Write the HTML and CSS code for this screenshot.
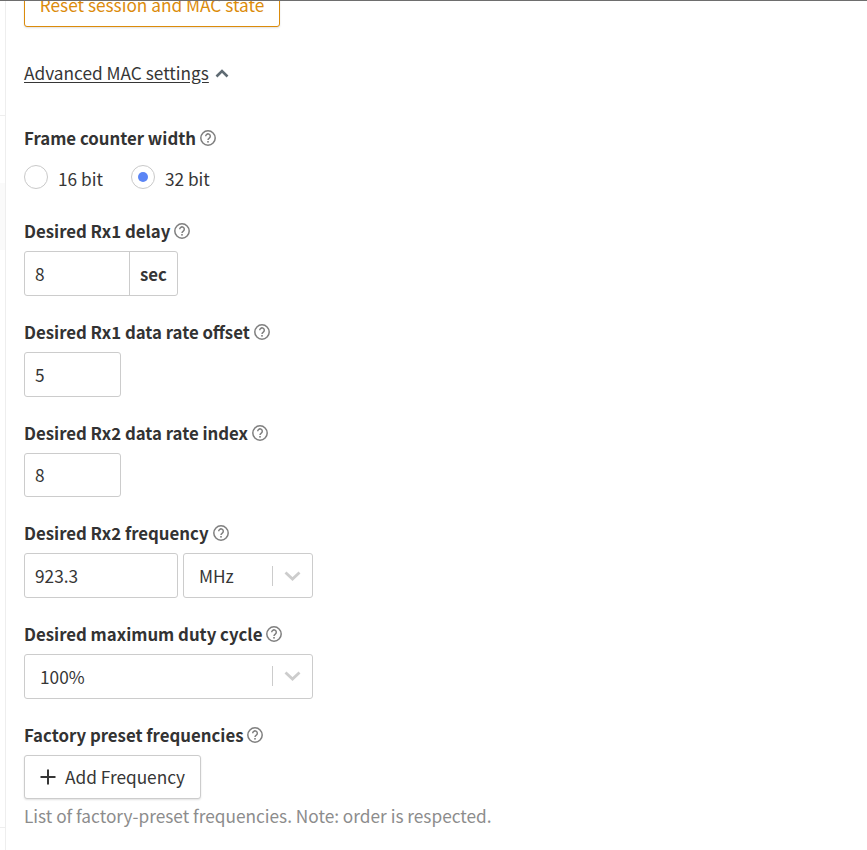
FILE: index.html
```html
<!DOCTYPE html>
<html lang="en">
<head>
  <meta charset="utf-8">
  <title>Advanced MAC settings</title>
  <link rel="stylesheet" href="styles.css">
</head>
<body>
  <div class="side-strip">
    <div class="strip-block strip-top"></div>
    <div class="strip-block strip-gap"></div>
    <div class="strip-block strip-fill"></div>
    <div class="strip-block strip-bottom"></div>
  </div>
  <div class="page">
    <main class="content">
      <div class="reset-row">
        <button class="button-reset">Reset session and MAC state</button>
      </div>

      <div class="collapse-row">
        <a class="collapse-link">Advanced MAC settings</a>
        <svg class="chevron-up" width="14" height="14" viewBox="0 0 14 14"><path d="M1.5 10.5 L7 5 L12.5 10.5" /></svg>
      </div>

      <div class="field field-radio">
        <div class="label"><span>Frame counter width</span><svg class="help" viewBox="0 0 16 16"><use href="#help" /></svg></div>
        <div class="radios">
          <label class="radio"><span class="radio-dot"></span><span class="radio-text">16 bit</span></label>
          <label class="radio"><span class="radio-dot checked"></span><span class="radio-text">32 bit</span></label>
        </div>
      </div>

      <div class="field">
        <div class="label"><span>Desired Rx1 delay</span><svg class="help" viewBox="0 0 16 16"><use href="#help" /></svg></div>
        <div class="input input-unit"><span class="value">8</span><span class="unit">sec</span></div>
      </div>

      <div class="field">
        <div class="label"><span>Desired Rx1 data rate offset</span><svg class="help" viewBox="0 0 16 16"><use href="#help" /></svg></div>
        <div class="input input-small"><span class="value">5</span></div>
      </div>

      <div class="field">
        <div class="label"><span>Desired Rx2 data rate index</span><svg class="help" viewBox="0 0 16 16"><use href="#help" /></svg></div>
        <div class="input input-small"><span class="value">8</span></div>
      </div>

      <div class="field">
        <div class="label"><span>Desired Rx2 frequency</span><svg class="help" viewBox="0 0 16 16"><use href="#help" /></svg></div>
        <div class="freq-row">
          <div class="input input-freq"><span class="value">923.3</span></div>
          <div class="input select select-unit">
            <span class="select-value">MHz</span>
            <span class="select-sep"></span>
            <svg class="chevron-down" width="17" height="10" viewBox="0 0 17 10"><path d="M1.5 1.5 L8.5 8 L15.5 1.5" /></svg>
          </div>
        </div>
      </div>

      <div class="field">
        <div class="label"><span>Desired maximum duty cycle</span><svg class="help" viewBox="0 0 16 16"><use href="#help" /></svg></div>
        <div class="input select select-wide">
          <span class="select-value">100%</span>
          <span class="select-sep"></span>
          <svg class="chevron-down" width="17" height="10" viewBox="0 0 17 10"><path d="M1.5 1.5 L8.5 8 L15.5 1.5" /></svg>
        </div>
      </div>

      <div class="field">
        <div class="label"><span>Factory preset frequencies</span><svg class="help" viewBox="0 0 16 16"><use href="#help" /></svg></div>
        <button class="button-add">
          <svg class="plus" width="16" height="16" viewBox="0 0 16 16"><path d="M8 .5 V15.5 M.5 8 H15.5" /></svg>
          Add Frequency
        </button>
        <div class="description">List of factory-preset frequencies. Note: order is respected.</div>
      </div>
    </main>
  </div>

  <svg class="defs" width="0" height="0">
    <symbol id="help" viewBox="0 0 16 16">
      <circle cx="8" cy="8" r="7.2" fill="none" stroke="currentColor" stroke-width="1.5" />
      <path d="M5.7 6.3 A2.3 2.3 0 1 1 9.3 8.1 C8.4 8.7 8 9 8 10" fill="none" stroke="currentColor" stroke-width="1.5" />
      <rect x="7.2" y="11" width="1.6" height="1.6" fill="currentColor" />
    </symbol>
  </svg>
</body>
</html>
```

FILE: styles.css
```css
html, body {
  margin: 0;
  height: 100%;
  overflow: hidden;
  background: #fff;
}
body {
  display: flex;
  font-family: "Noto Sans CJK JP", "Source Sans Pro", "Noto Sans", sans-serif;
  font-size: 17.25px;
  color: #363636;
  border-top: 1px solid #6e6e6e;
  box-sizing: border-box;
}
.side-strip {
  width: 5px;
  flex: none;
}
.strip-block {
  box-sizing: border-box;
}
.strip-top {
  height: 115px;
  border-bottom: 1px solid #eeeeee;
}
.strip-gap {
  height: 67px;
}
.strip-fill {
  height: 67px;
  background: #fafafa;
}
.strip-bottom {
  height: 578px;
  border-bottom: 1px solid #eeeeee;
}
.page {
  flex: 1;
  display: flow-root;
  border-left: 1px solid #eeeeee;
}
.content {
  padding-left: 18px;
  margin-top: -16px;
}
button {
  font: inherit;
  background: #fff;
  cursor: pointer;
}
.reset-row {
  height: 42px;
}
.button-reset {
  display: block;
  width: 256px;
  height: 42px;
  color: #db8b0b;
  border: 1px solid #db8b0b;
  border-radius: 3px;
  box-shadow: 0 1px 2px rgba(0,0,0,.12);
  padding: 0 0 3px;
}
.collapse-row {
  display: flex;
  align-items: center;
  gap: 6px;
  margin-top: 34px;
  height: 24px;
}
.collapse-link {
  text-decoration: underline;
  text-underline-offset: 2px;
  line-height: 24px;
}
.chevron-up path {
  fill: none;
  stroke: #5f6b73;
  stroke-width: 2.6;
}
.field {
  margin-top: 24px;
}
.field-radio {
  margin-top: 41px;
}
.label {
  display: flex;
  align-items: center;
  gap: 4px;
  height: 24px;
  font-size: 16.8px;
  font-weight: 700;
  color: #333;
  margin-bottom: 8px;
}
.help {
  width: 16px;
  height: 16px;
  color: #7f7f7f;
}
.radios {
  display: flex;
  gap: 28px;
  height: 26px;
  align-items: center;
  margin: 14px 0 29.3px;
}
.radio {
  display: flex;
  align-items: center;
  gap: 10px;
}
.radio-text {
  padding-top: 2px;
}
.radio-dot {
  box-sizing: border-box;
  width: 24px;
  height: 24px;
  border: 1px solid #c9c9c9;
  border-radius: 50%;
  display: flex;
  align-items: center;
  justify-content: center;
}
.radio-dot.checked::after {
  content: "";
  width: 10px;
  height: 10px;
  border-radius: 50%;
  background: #5b85f5;
}
.input {
  box-sizing: border-box;
  height: 44.67px;
  border: 1px solid #cccccc;
  border-radius: 3px;
  display: flex;
  align-items: center;
}
.value {
  padding-left: 10px;
  flex: 1;
}
.input-unit {
  width: 154px;
}
.unit {
  box-sizing: border-box;
  width: 48px;
  height: 100%;
  border-left: 1px solid #cccccc;
  font-size: 16.8px;
  font-weight: 700;
  display: flex;
  align-items: center;
  justify-content: center;
}
.input-small {
  width: 97px;
}
.freq-row {
  display: flex;
  gap: 5px;
}
.input-freq {
  width: 154px;
}
.select-unit {
  width: 130px;
}
.select-wide {
  width: 289px;
}
.select-value {
  padding-left: 15px;
  flex: 1;
}
.select-sep {
  width: 1px;
  height: 20px;
  background: #cccccc;
}
.chevron-down {
  margin: 0 11px 0 11px;
}
.chevron-down path {
  fill: none;
  stroke: #cccccc;
  stroke-width: 2.8;
}
.button-add {
  display: flex;
  align-items: center;
  gap: 9px;
  box-sizing: border-box;
  width: 177px;
  height: 44.67px;
  padding: 0 0 0 15px;
  color: #363636;
  border: 1px solid #cccccc;
  border-radius: 3px;
  box-shadow: 0 1px 2px rgba(0,0,0,.12);
}
.plus path {
  fill: none;
  stroke: #363636;
  stroke-width: 2;
}
.description {
  margin-top: 5px;
  color: #8c8c8c;
  line-height: 24px;
}
.defs {
  position: absolute;
}
```
